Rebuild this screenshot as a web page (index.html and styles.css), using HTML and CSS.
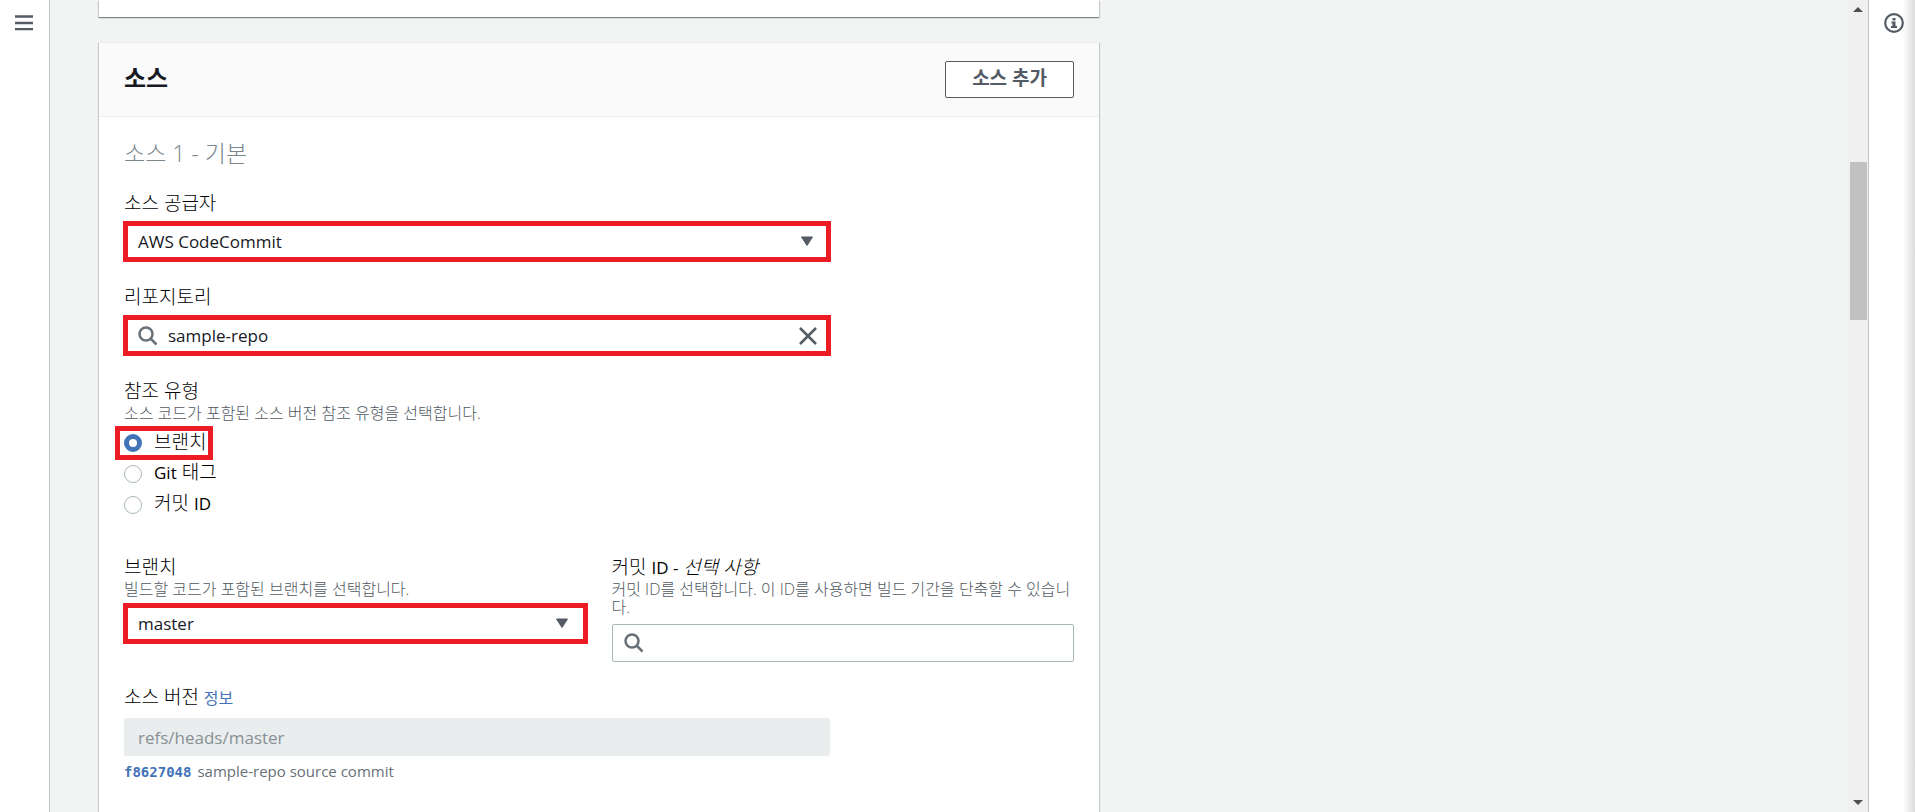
FILE: index.html
```html
<!DOCTYPE html>
<html lang="ko">
<head>
  <meta charset="UTF-8" />
  <meta name="viewport" content="width=device-width, initial-scale=1.0" />
  <title>AWS CodeBuild</title>
  <link rel="stylesheet" href="styles.css">
</head>
<body>
  <nav class="rail">
    <button class="icon-button" aria-label="메뉴">
      <svg width="18" height="18" viewBox="0 0 18 18" stroke="#545b64" stroke-width="2.300"><path d="M0 2.500h18M0 9h18M0 15.200h18"/></svg>
    </button>
  </nav>

  <main class="content">
    <section class="card card-prev"></section>

    <section class="card">
      <header class="card-header">
        <h2>소스</h2>
        <button class="add-button">소스 추가</button>
      </header>

      <form class="card-body">
        <h3>소스 1 - 기본</h3>

        <div class="field">
          <label class="label" for="provider">소스 공급자</label>
          <div class="control highlight">
            <select id="provider"><option>AWS CodeCommit</option></select>
            <svg class="arrow" width="14" height="11" viewBox="0 0 14 11"><path d="M1.500 1h11L7 9.500z" fill="#545b64" stroke="#545b64" stroke-linejoin="round"/></svg>
          </div>
        </div>

        <div class="field">
          <label class="label" for="repo">리포지토리</label>
          <div class="control highlight">
            <svg class="search" width="20" height="20" viewBox="0 0 20 20" fill="none" stroke="#687078" stroke-width="2.500"><circle cx="8" cy="8" r="6.500"/><path d="M12.500 12.500l6 6"/></svg>
            <input id="repo" class="with-icon" type="text" value="sample-repo">
            <button type="button" class="clear" aria-label="지우기">
              <svg width="18" height="18" viewBox="0 0 18 18" stroke="#545b64" stroke-width="2.500"><path d="M1 1l16 16M17 1L1 17"/></svg>
            </button>
          </div>
        </div>

        <fieldset class="field">
          <legend class="label">참조 유형</legend>
          <p class="desc">소스 코드가 포함된 소스 버전 참조 유형을 선택합니다.</p>
          <div class="radios">
            <label class="radio highlight"><input type="radio" name="ref" checked><span>브랜치</span></label>
            <label class="radio"><input type="radio" name="ref"><span><span class="en">Git</span> 태그</span></label>
            <label class="radio"><input type="radio" name="ref"><span>커밋 <span class="en">ID</span></span></label>
          </div>
        </fieldset>

        <div class="columns">
          <div class="field">
            <label class="label" for="branch">브랜치</label>
            <p class="desc">빌드할 코드가 포함된 브랜치를 선택합니다.</p>
            <div class="control highlight">
              <select id="branch"><option>master</option></select>
              <svg class="arrow" width="14" height="11" viewBox="0 0 14 11"><path d="M1.500 1h11L7 9.500z" fill="#545b64" stroke="#545b64" stroke-linejoin="round"/></svg>
            </div>
          </div>
          <div class="field">
            <label class="label" for="commit">커밋 <span class="en">ID -</span> <em>선택 사항</em></label>
            <p class="desc">커밋 ID를 선택합니다. 이 ID를 사용하면 빌드 기간을 단축할 수 있습니다.</p>
            <div class="control bordered">
              <svg class="search" width="20" height="20" viewBox="0 0 20 20" fill="none" stroke="#687078" stroke-width="2.500"><circle cx="8" cy="8" r="6.500"/><path d="M12.500 12.500l6 6"/></svg>
              <input id="commit" class="with-icon" type="text">
            </div>
          </div>
        </div>

        <div class="field">
          <div class="label"><label for="version">소스 버전</label> <a class="info" href="#">정보</a></div>
          <div class="control disabled">
            <input id="version" type="text" value="refs/heads/master" disabled>
          </div>
          <p class="hint"><a href="#">f8627048</a>sample-repo source commit</p>
        </div>
      </form>
    </section>
  </main>

  <div class="scrollbar">
    <svg width="10" height="5" viewBox="0 0 10 5"><path d="M0 5l5-5 5 5z" fill="#505050"/></svg>
    <div class="track"><div class="thumb"></div></div>
    <svg width="10" height="5" viewBox="0 0 10 5"><path d="M0 0l5 5 5-5z" fill="#505050"/></svg>
  </div>

  <aside class="rail rail-right">
    <button class="icon-button" aria-label="정보">
      <svg width="20" height="20" viewBox="0 0 20 20"><circle cx="10" cy="10" r="8.800" fill="none" stroke="#545b64" stroke-width="2.200"/><path d="M8.500 5h3v2.500h-3zM7.500 8.500h4v4.500h1.500v2h-6v-2h1.500v-2.500H7.500z" fill="#545b64"/></svg>
    </button>
  </aside>
</body>
</html>
```
FILE: styles.css
```css
* {
  box-sizing: border-box;
}

body {
  margin: 0;
  height: 100vh;
  display: flex;
  overflow: hidden;
  background: #f2f3f3;
  color: #16191f;
  font-family: "Open Sans", "Noto Sans CJK KR", sans-serif;
  font-size: 17px;
}

h2, h3, p, fieldset {
  margin: 0;
}

button, input, select {
  font-family: inherit;
  font-size: inherit;
  color: inherit;
}

a {
  color: #4273b8;
  text-decoration: none;
}

/* side rails */
.rail {
  flex: 0 0 50px;
  padding: 14px 2px 0 0;
  background: #fff;
  border-right: 1px solid #c0c4c4;
  text-align: center;
}

.rail-right {
  flex-basis: 47px;
  padding: 13px 0 0 4px;
  border-right: none;
  border-left: 1px solid #c0c4c4;
  background: linear-gradient(to left, #dcdcdc, #fff 12px);
}

.icon-button {
  padding: 0;
  border: none;
  background: none;
  cursor: pointer;
}

.icon-button svg {
  display: block;
}

/* cards */
.content {
  flex: 1;
  padding: 0 49px;
  overflow: hidden;
}

.card {
  max-width: 1000px;
  background: #fff;
  border-top: 1px solid #eaeded;
  box-shadow: 0 1px 1px 0 rgba(0, 28, 36, 0.3), 1px 1px 1px 0 rgba(0, 28, 36, 0.15), -1px 1px 1px 0 rgba(0, 28, 36, 0.15);
}

.card-prev {
  height: 17px;
  margin-bottom: 25px;
  border-top: none;
}

.card-header {
  display: flex;
  justify-content: space-between;
  align-items: center;
  height: 74px;
  padding: 0 25px;
  background: #fafafa;
  border-bottom: 1px solid #eaeded;
}

h2 {
  font-size: 24px;
  line-height: 30px;
  padding-bottom: 4px;
}

.add-button {
  height: 37px;
  padding: 0 26px 4px;
  border: 1px solid #545b64;
  border-radius: 2px;
  background: #fff;
  color: #545b64;
  font-size: 19px;
  font-weight: 700;
  line-height: 24px;
  cursor: pointer;
}

.card-body {
  padding: 21px 25px 80px;
}

h3 {
  margin-bottom: 23px;
  font-size: 23px;
  font-weight: 300;
  line-height: 30px;
  color: #7b868b;
}

/* form fields */
.field {
  max-width: 706px;
  min-width: 0;
  margin-bottom: 23px;
  padding: 0;
  border: none;
}

.label {
  display: block;
  padding: 0;
  font-size: 19px;
  font-weight: 300;
  line-height: 25px;
  color: #000;
}

.label .en,
.radio .en {
  font-size: 17px;
  font-weight: 400;
}

.desc {
  font-size: 16px;
  font-weight: 300;
  line-height: 18px;
  color: #50585f;
  word-break: break-all;
}

.control {
  display: flex;
  align-items: center;
  position: relative;
  height: 38px;
  margin-top: 7px;
  border-radius: 2px;
}

.control select,
.control input {
  flex: 1;
  min-width: 0;
  height: 100%;
  padding: 0 14px;
  border: none;
  outline: none;
  appearance: none;
  background: transparent;
}

.highlight {
  border: 5px solid #ed1c24;
  border-radius: 0;
}

.control.highlight {
  height: 41px;
  margin: 5px -1px 0;
}

.control.highlight select {
  padding-left: 10px;
}

.bordered {
  margin-top: 8px;
  border: 1px solid #aab7b8;
}

.disabled {
  background: #eaeded;
  color: #879196;
}

.arrow {
  position: absolute;
  right: 12px;
  pointer-events: none;
}

.columns .arrow {
  right: 14px;
}

.search {
  flex: none;
  margin-left: 11px;
}

.highlight .search {
  margin-left: 10px;
}

.control .with-icon {
  padding-left: 10px;
}

.clear {
  padding: 0;
  margin-right: 9px;
  border: none;
  background: none;
  cursor: pointer;
}

.clear svg {
  display: block;
}

/* reference type */
.radios {
  display: flex;
  flex-direction: column;
  align-items: flex-start;
  margin-top: 5px;
}

.radio {
  display: flex;
  align-items: center;
  gap: 12px;
  height: 31px;
  font-size: 19px;
  font-weight: 300;
  line-height: 24px;
  color: #000;
}

.radio > span {
  padding-bottom: 3px;
}

.radio.highlight {
  height: 34px;
  margin: -1px 0 -2px -9px;
  padding: 0 2px 0 4px;
}

.radio input {
  appearance: none;
  width: 18px;
  height: 18px;
  margin: 0;
  border: 1px solid #aab7b8;
  border-radius: 50%;
  background: #fff;
}

.radio input:checked {
  border: 5px solid #4273b8;
}

.columns {
  display: grid;
  grid-template-columns: 1fr 1fr;
  gap: 25px;
  margin-top: 35px;
}

.info {
  font-size: 16px;
  font-weight: 400;
}

.hint {
  margin-top: 6px;
  font-size: 15px;
  line-height: 18px;
  color: #687078;
}

.hint a {
  margin-right: 6px;
  font-family: "DejaVu Sans Mono", monospace;
  font-size: 14px;
  font-weight: 700;
}

/* page scrollbar */
.scrollbar {
  flex: 0 0 20px;
  display: flex;
  flex-direction: column;
  align-items: center;
  padding: 7px 0;
  background: #f0f0f0;
}

.track {
  flex: 1;
  width: 17px;
}

.thumb {
  height: 20%;
  margin-top: 150px;
  background: #c1c1c1;
}
```
